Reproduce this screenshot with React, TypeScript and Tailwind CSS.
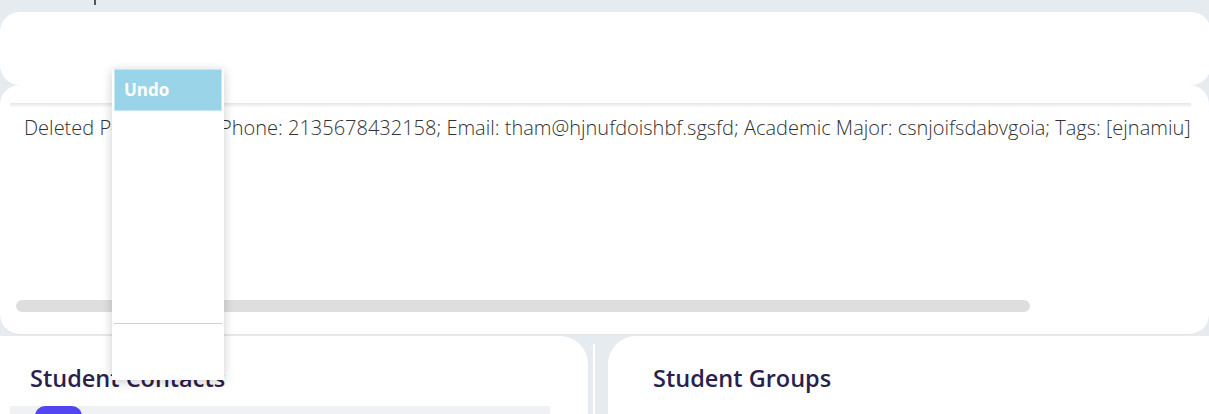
import React from "react";

const font = { fontFamily: '"Open Sans", "Noto Sans", sans-serif' };

function App() {
  return (
    <div className="relative w-[1209px] h-[414px] overflow-hidden bg-[#e6ebf0]" style={font}>
      {/* top strip */}
      <div className="h-3 relative">
        <div className="absolute left-[94px] top-0 w-[2px] h-[5px] bg-[#555]" />
      </div>

      {/* search card */}
      <div className="h-[73px] bg-white rounded-[20px] -mr-[2px]" />

      {/* result display */}
      <div className="h-[250px] bg-white rounded-[20px] border-b border-[#e3e6ea] pt-[18px] pl-[10px] pr-[18px]">
        <div className="h-full flex flex-col">
          <div className="h-[4px] bg-gradient-to-b from-[#e6e6e6] to-[#fafafa]" />
          <div className="overflow-hidden whitespace-nowrap pl-[14px] pt-[6px] text-[20px] font-light text-[#333]">
            Deleted Person: Thai; Phone: 2135678432158; Email: tham@hjnufdoishbf.sgsfd; Academic Major: csnjoifsdabvgoia; Tags: [ejnamiu]
          </div>
          <div className="mt-auto mb-[22px] ml-[6px] w-[1014px] h-3 rounded-full bg-[#dedede]" />
        </div>
      </div>

      {/* bottom panels */}
      <div className="flex mt-[1px] h-[80px]">
        <div className="w-[588px] bg-white rounded-tr-[28px] pt-[26px] flex flex-col">
          <h2 className="pl-[30px] text-[23.5px] font-semibold text-[#2b1f4d] leading-[32px]">Student Contacts</h2>
          <div className="mt-[12px] ml-[10px] w-[540px] h-8 bg-[#f0f1f5] relative">
            <div className="absolute left-[25px] top-0 w-[47px] h-6 rounded-t-[10px] bg-[#5146f0]" />
          </div>
        </div>
        <div className="w-[20px] flex pl-[5px]">
          <div className="w-[2px] h-full bg-white mt-[8px]" />
        </div>
        <div className="flex-1 bg-white rounded-tl-[28px] pt-[26px]">
          <h2 className="pl-[45px] text-[23.5px] font-semibold text-[#2b1f4d] leading-[32px]">Student Groups</h2>
        </div>
      </div>

      {/* context menu */}
      <div className="absolute left-[112px] top-[69px] w-[112px] h-[311px] bg-white shadow-[0_2px_10px_rgba(0,0,0,0.2)] flex flex-col px-[2px]">
        <div className="h-[42px] bg-[#9ad4e8] border border-[#c5e8f3] flex items-center pl-[9px] text-white font-bold text-[17px]">
          Undo
        </div>
        <div className="mt-[212px] h-[1px] bg-[#cfcfcf]" />
      </div>
    </div>
  );
}

export default App;
